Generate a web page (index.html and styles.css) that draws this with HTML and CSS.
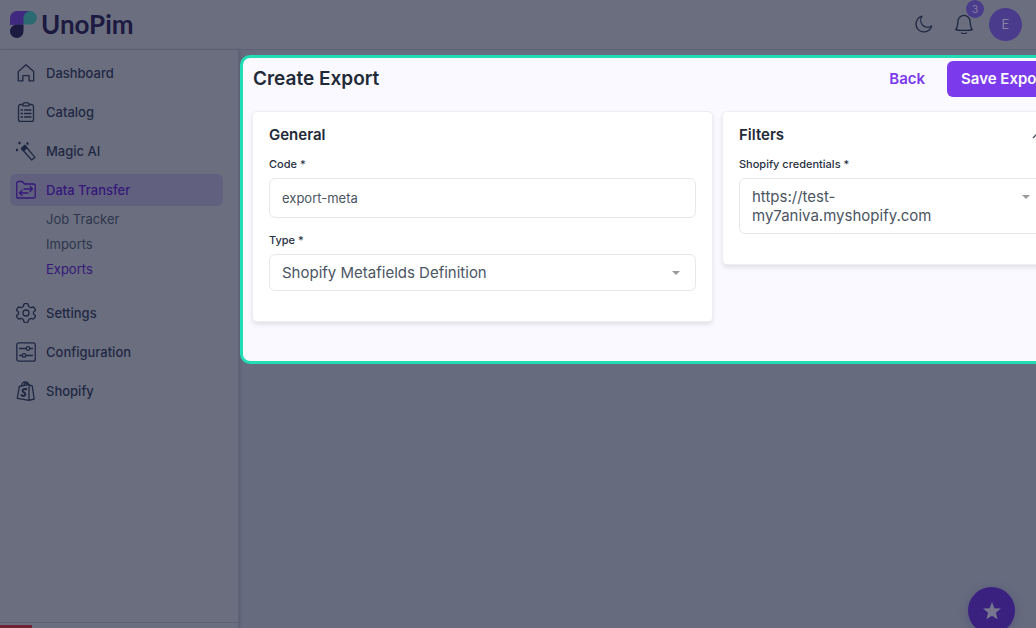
FILE: index.html
```html
<!DOCTYPE html>
<html lang="en">

<head>
    <meta charset="utf-8">
    <meta name="viewport" content="width=device-width, initial-scale=1">
    <title>Create Export - UnoPim</title>
    <link rel="stylesheet" href="styles.css">
</head>

<body>
    <header class="header">
        <a class="logo" href="#">
            <svg width="27" height="27" viewBox="0 0 27 27">
                <path d="M0 14V7a7 7 0 0 1 7-7h13.500l-7 13.500z" fill="#3f2a80" />
                <path d="M13.500 13.500V6.500a6.700 6.700 0 1 1 6.800 7z" fill="#2a6a70" />
                <path d="M0 20.200a6.800 6.800 0 0 1 6.800-6.700h6.700v6.700a6.750 6.750 0 0 1-13.500 0z" fill="#1c1a40" />
            </svg>
            <span>UnoPim</span>
        </a>
        <div class="tools">
            <button class="icon-btn" type="button" aria-label="Dark mode">
                <svg class="icon" viewBox="0 0 20 20"><path d="M8 2.200A8 8 0 1 0 17.700 12 7 7 0 0 1 8 2.200z" /></svg>
            </button>
            <button class="icon-btn" type="button" aria-label="Notifications">
                <svg class="icon" viewBox="0 0 20 20"><path d="M1.700 15.500C3.600 13.500 3.600 11.500 3.900 7.500a6.100 6.100 0 0 1 12.200 0c.3 4 .3 6 2.200 8-1 1.300-15.600 1.300-16.600 0zM7.500 19q2.500 1.300 5 0" /></svg>
                <span class="badge">3</span>
            </button>
            <button class="avatar" type="button">E</button>
        </div>
    </header>

    <div class="layout">
        <!-- sidebar -->
        <aside class="sidebar">
            <nav class="menu">
                <a class="menu-item" href="#">
                    <svg class="icon" viewBox="0 0 20 20"><path d="M2.300 8.500 10 1.800l7.700 6.700v9.300h-4.600v-5.200H6.900v5.200H2.300z" /></svg>
                    Dashboard
                </a>
                <a class="menu-item" href="#">
                    <svg class="icon" viewBox="0 0 20 20"><path d="M7 2.500H4.500a2 2 0 0 0-2 2v13a2 2 0 0 0 2 2h11a2 2 0 0 0 2-2v-13a2 2 0 0 0-2-2H13M7 1.500Q10-.2 13 1.500v2.300H7zM5 8h1.500M8.500 8H15M5 11.500h1.500M8.500 11.500H15M5 15h1.500M8.500 15H15" /></svg>
                    Catalog
                </a>
                <a class="menu-item" href="#">
                    <svg class="icon" viewBox="0 0 20 20"><path d="m5.500 7.500 3.400-3L19 16.300 15.700 19z" /><path class="solid" d="m5.500 7.500 3.400-3 2 2.300-3.400 3zM3 1.500h1v1H3zM11 2h1v1h-1zM.500 8.500h1v1h-1z" /></svg>
                    Magic AI
                </a>
                <a class="menu-item active" href="#">
                    <svg class="icon" viewBox="0 0 20 20"><path d="M.8 17.500V3a1.500 1.500 0 0 1 1.500-1.500h4L8.500 4h9.200a1.500 1.500 0 0 1 1.500 1.500v11a1.500 1.500 0 0 1-1.500 1.500H1.300zM8 9h8.500M14 6.500 16.500 9 14 11.500M12 13H3.500M6 10.500 3.500 13 6 15.500" /></svg>
                    Data Transfer
                </a>
                <div class="submenu">
                    <a href="#">Job Tracker</a>
                    <a href="#">Imports</a>
                    <a class="current" href="#">Exports</a>
                </div>
                <a class="menu-item" href="#">
                    <svg class="icon" viewBox="0 0 20 20"><circle cx="10" cy="10" r="3" /><path d="M8 1q2-1.200 4 0l.7 2.500 2.100 1.200 2.600-.7q2 1.500 2 3.500L17.500 9v2l1.900 1.500q0 2-2 3.500l-2.600-.7-2.100 1.200L12 19q-2 1.200-4 0l-.7-2.500-2.100-1.200-2.600.7q-2-1.500-2-3.500L2.500 11V9L.600 7.500q0-2 2-3.500l2.600.7 2.100-1.200z" /></svg>
                    Settings
                </a>
                <a class="menu-item" href="#">
                    <svg class="icon" viewBox="0 0 20 20"><rect x=".8" y=".8" width="18.400" height="18.400" rx="2" /><circle cx="12" cy="6.500" r="1.800" /><circle cx="8" cy="13.500" r="1.800" /><path d="M3.500 6.500h6.700M13.800 6.500h2.700M3.500 13.500h2.700M9.800 13.500h6.700" /></svg>
                    Configuration
                </a>
                <a class="menu-item" href="#">
                    <svg class="icon" viewBox="0 0 20 20"><path d="m3.300 5.500 9.700-2.200v16L1.300 17.300zM13 4l3.200.8 2 13.200-5.200 1.300M5.500 5C6 2 7.500.8 9 .8s2 1 2 2.900M8 4.500C8.500 2 10 .500 11.500 1.500c.7.500 1 1.200 1 2" /><path class="bold" d="M10.200 8.300c-2-.8-3.600-.1-3.600 1.400 0 1.800 2.700 1.700 2.700 3.600 0 1.700-1.800 2.100-3.800.9" /></svg>
                    Shopify
                </a>
            </nav>
            <div class="sidebar-foot"></div>
        </aside>

        <main class="content">
            <form class="panel">
                <div class="panel-head">
                    <h1>Create Export</h1>
                    <div class="actions">
                        <a class="back" href="#">Back</a>
                        <button class="save" type="submit">Save Export</button>
                    </div>
                </div>

                <div class="cards">
                    <section class="card general">
                        <h2>General</h2>
                        <div class="field">
                            <label for="code">Code *</label>
                            <input id="code" type="text" value="export-meta">
                        </div>
                        <div class="field">
                            <label for="type">Type *</label>
                            <div class="select">
                                <select id="type">
                                    <option>Shopify Metafields Definition</option>
                                </select>
                            </div>
                        </div>
                    </section>

                    <section class="card filters">
                        <h2>
                            Filters
                            <svg class="chevron" viewBox="0 0 14 14"><path d="m1 10 6-6 6 6" /></svg>
                        </h2>
                        <div class="field">
                            <label for="credentials">Shopify credentials *</label>
                            <div class="select">
                                <select id="credentials">
                                    <option>https://test-my7aniva.myshopify.com</option>
                                </select>
                            </div>
                        </div>
                    </section>
                </div>
            </form>
        </main>
    </div>

    <button class="fab" type="button" aria-label="Favourites">
        <svg width="18" height="18" viewBox="0 0 18 18"><path d="m9 0 2.400 6.200 6.600.4-5.100 4.200 1.700 6.500L9 13.700l-5.600 3.600 1.700-6.500L0 6.600l6.600-.4z" /></svg>
    </button>
    <div class="progress"></div>
</body>

</html>
```

FILE: styles.css
```css
* {
    box-sizing: border-box;
}

body {
    display: flex;
    flex-direction: column;
    min-height: 100vh;
    margin: 0;
    overflow-x: hidden;
    background: #666b7e;
    color: #1f2937;
    font: 13px/20px Inter, "Liberation Sans", sans-serif;
}

a {
    color: inherit;
    text-decoration: none;
}

button {
    padding: 0;
    border: 0;
    background: none;
    font: inherit;
}

h1,
h2 {
    margin: 0;
}

.icon {
    width: 20px;
    height: 20px;
    fill: none;
    stroke: currentColor;
    stroke-width: 1.3;
    stroke-linejoin: round;
    stroke-linecap: round;
}

.icon .solid {
    fill: currentColor;
}

.icon .bold {
    stroke-width: 2;
}

/* header */
.header {
    display: flex;
    align-items: center;
    justify-content: space-between;
    height: 50px;
    padding: 0 14px 1px 10px;
    border-bottom: 1px solid #5e6274;
    background: #6b6e7f;
    color: #1f2842;
}

.logo {
    display: flex;
    align-items: center;
    gap: 4px;
    color: #1c1a40;
    font: 700 26px/32px Lato, sans-serif;
}

.tools {
    display: flex;
    align-items: center;
    gap: 20px;
}

.icon-btn {
    position: relative;
    width: 20px;
    height: 20px;
    color: inherit;
}

.badge {
    position: absolute;
    top: -14px;
    right: -10px;
    width: 18px;
    height: 18px;
    border-radius: 50%;
    background: #4a3b8c;
    color: #8582a0;
    font-size: 10px;
    line-height: 18px;
}

.avatar {
    width: 33px;
    height: 33px;
    margin-left: -5px;
    border-radius: 50%;
    background: #4a3b8c;
    color: #8582a0;
}

/* sidebar */
.layout {
    display: flex;
    flex: 1;
}

.sidebar {
    display: flex;
    flex: none;
    flex-direction: column;
    width: 239px;
    border-right: 1px solid #5e6274;
    background: #6b6e7f;
    box-shadow: 1px 0 3px #585c6e;
    color: #1f2842;
}

.menu {
    display: flex;
    flex: 1;
    flex-direction: column;
    gap: 7px;
    padding: 7px 15px 0 10px;
}

.menu-item {
    display: flex;
    align-items: center;
    gap: 10px;
    height: 32px;
    padding: 0 6px;
    border-radius: 6px;
    font-weight: 500;
}

.menu-item.active {
    background: #61607f;
    color: #351878;
}

.submenu {
    display: flex;
    flex-direction: column;
    margin-top: -6px;
    padding: 0 0 8px 36px;
    color: #2d364c;
    line-height: 25px;
}

.submenu .current {
    color: #351878;
}

.sidebar-foot {
    height: 6px;
    border-top: 1px solid #5e6274;
}

/* content */
.content {
    flex: 1;
    min-width: 0;
    padding: 5px 0 0 1px;
}

/* runs on past the right edge of the window */
.panel {
    margin-right: -39px;
    padding: 3px 10px 40px;
    border: 3px solid #22dcb5;
    border-radius: 10px;
    background: #faf9ff;
}

.panel-head {
    display: flex;
    align-items: center;
    justify-content: space-between;
    margin-bottom: 15px;
}

h1 {
    font-size: 19px;
    font-weight: 600;
    line-height: 24px;
}

.actions {
    display: flex;
    align-items: center;
    gap: 22px;
    font-size: 15px;
    font-weight: 600;
}

.back {
    color: #7c3aed;
}

.save {
    height: 36px;
    padding: 0 14px;
    border-radius: 6px;
    background: #7c3aed;
    color: #fafafa;
}

.cards {
    display: flex;
    align-items: flex-start;
    gap: 11px;
}

.card {
    padding: 11px 16px 30px;
    border-radius: 4px;
    background: #fff;
    box-shadow: 0 0 0 1px #ededf2, 0 3px 5px #dcdbe2;
}

.general {
    flex: 1;
}

.filters {
    flex: none;
    width: 339px;
}

h2 {
    display: flex;
    align-items: center;
    justify-content: space-between;
    font-size: 15px;
    font-weight: 600;
    line-height: 24px;
}

.chevron {
    width: 14px;
    height: 14px;
    fill: none;
    stroke: #4b5563;
    stroke-width: 1.5;
}

.field {
    display: flex;
    flex-direction: column;
    gap: 6px;
    margin-top: 9px;
}

.field + .field {
    margin-top: 14px;
}

label {
    color: #27303f;
    font-size: 11px;
    font-weight: 500;
    line-height: 16px;
}

input,
select {
    width: 100%;
    border: 1px solid #e5e7eb;
    border-radius: 6px;
    background: #fff;
    color: #4b5563;
    font: inherit;
}

input {
    height: 40px;
    padding: 0 12px;
}

.select {
    display: flex;
    position: relative;
}

/* caret drawn over the select */
.select::after {
    content: "";
    position: absolute;
    top: 17px;
    right: 16px;
    border: 4px solid transparent;
    border-top: 4px solid #999;
    border-bottom: 0;
}

select {
    appearance: none;
    height: auto;
    padding: 8px 50px 8px 12px;
    font-size: 15px;
    line-height: 19px;
    white-space: normal;
}

/* floating button */
.fab {
    display: flex;
    position: fixed;
    right: 21px;
    bottom: -6px;
    align-items: center;
    justify-content: center;
    width: 47px;
    height: 47px;
    border-radius: 50%;
    background: #3a2180;
    box-shadow: 0 2px 10px #575878;
    fill: #77758f;
}

.progress {
    position: fixed;
    bottom: 0;
    left: 0;
    width: 32px;
    height: 3px;
    background: #6e2133;
}
```
